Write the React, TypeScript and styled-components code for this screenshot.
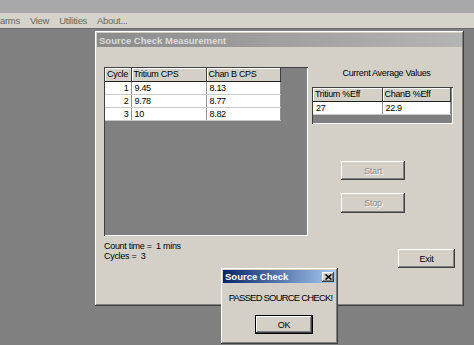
import React from 'react';
import styled, { createGlobalStyle } from 'styled-components';

const GlobalStyle = createGlobalStyle`
  html, body {
    margin: 0;
    padding: 0;
    background: #808080;
  }
  body {
    font-family: "Liberation Sans", Arial, sans-serif;
    font-size: 9px;
    letter-spacing: -0.3px;
    color: #000;
  }
`;

const raised = `
  box-shadow: inset -1px -1px #404040, inset 1px 1px #ffffff,
    inset -2px -2px #808080, inset 2px 2px #d4d0c8;
`;

const Screen = styled.div`
  width: 474px;
  height: 345px;
  overflow: hidden;
  display: flex;
  flex-direction: column;
`;

const TopBand = styled.div`
  height: 13px;
  background: #a8a8aa;
`;

const MenuBar = styled.div`
  height: 15px;
  display: flex;
  align-items: center;
  gap: 10px;
  background: #d6d3ca;
  border-bottom: 1px solid #6a6a6a;
  color: #666;
  font-size: 9.5px;
`;

const MenuItem = styled.span`
  white-space: nowrap;
`;

const Desktop = styled.div`
  position: relative;
  flex: 1;
  background: #808080;
`;

const Window = styled.div<{ $left: number; $top: number; $width: number; $height: number }>`
  position: absolute;
  left: ${(p) => p.$left}px;
  top: ${(p) => p.$top}px;
  width: ${(p) => p.$width}px;
  height: ${(p) => p.$height}px;
  box-sizing: border-box;
  padding: 2px;
  background: #d4d0c8;
  ${raised}
  display: flex;
  flex-direction: column;
`;

const TitleBar = styled.div<{ $active?: boolean }>`
  height: ${(p) => (p.$active ? 13 : 14)}px;
  flex: none;
  display: flex;
  align-items: center;
  justify-content: space-between;
  padding: 0 2px;
  background: ${(p) =>
    p.$active
      ? 'linear-gradient(to right, #0a246a, #a6caf0)'
      : 'linear-gradient(to right, #8c8c8c, #b4b4b4)'};
  color: ${(p) => (p.$active ? '#ffffff' : '#dcdcdc')};
  font-weight: bold;
  font-size: ${(p) => (p.$active ? 9.5 : 9.5)}px;
  letter-spacing: 0;
  white-space: nowrap;
`;

const CloseBox = styled.div`
  width: 12px;
  height: 10px;
  box-sizing: border-box;
  background: #d4d0c8;
  ${raised}
  display: flex;
  align-items: center;
  justify-content: center;
`;

const Content = styled.div`
  display: flex;
  gap: 4px;
  padding: 20px 0 0 7px;
`;

const LeftCol = styled.div`
  width: 204px;
  display: flex;
  flex-direction: column;
`;

const RightCol = styled.div`
  width: 143px;
  display: flex;
  flex-direction: column;
`;

const GridBox = styled.div<{ $width: number; $height: number; $gap?: number }>`
  width: ${(p) => p.$width}px;
  height: ${(p) => p.$height}px;
  margin-top: ${(p) => p.$gap ?? 0}px;
  box-sizing: border-box;
  background: #808080;
  box-shadow: inset 1px 1px #404040, inset -1px -1px #ffffff;
  padding: 1px;
  overflow: hidden;
`;

const Table = styled.table`
  border-collapse: collapse;
  table-layout: fixed;
`;

const HeadCell = styled.th<{ $w: number }>`
  width: ${(p) => p.$w}px;
  height: 13px;
  box-sizing: border-box;
  padding: 0 0 0 2px;
  background: #d4d0c8;
  border-right: 1px solid #404040;
  border-bottom: 1px solid #202020;
  box-shadow: inset 1px 1px #ffffff;
  font-weight: normal;
  text-align: left;
  white-space: nowrap;
  line-height: 12px;
`;

const Cell = styled.td<{ $right?: boolean }>`
  height: 13px;
  box-sizing: border-box;
  padding: ${(p) => (p.$right ? '0 2px 0 0' : '0 0 0 3px')};
  background: #ffffff;
  border-right: 1px solid #909090;
  border-bottom: 1px solid #c8c8c8;
  text-align: ${(p) => (p.$right ? 'right' : 'left')};
  line-height: 12px;
  white-space: nowrap;
`;

const InfoText = styled.div`
  margin-top: 5px;
  line-height: 10px;
`;

const Caption = styled.div`
  margin-top: 1px;
  height: 10px;
  line-height: 10px;
  text-align: center;
  padding-left: 6px;
`;

const Button = styled.button<{ $w: number; $h?: number; $default?: boolean }>`
  width: ${(p) => p.$w}px;
  height: ${(p) => p.$h ?? 19}px;
  box-sizing: border-box;
  padding: 0;
  border: ${(p) => (p.$default ? '1px solid #000' : 'none')};
  background: #d4d0c8;
  ${raised}
  font-family: inherit;
  font-size: 9px;
  letter-spacing: -0.2px;
  color: #000;
  &:disabled {
    color: #8a8a8a;
    text-shadow: 1px 1px #ffffff;
  }
`;

const StartButton = styled(Button)`
  margin: 37px 0 0 29px;
`;

const StopButton = styled(Button)`
  margin: 13px 0 0 29px;
`;

const ExitButton = styled(Button)`
  margin-top: 36px;
  align-self: flex-end;
`;

const Message = styled.div`
  margin-top: 10px;
  line-height: 10px;
  text-align: center;
  font-size: 9.5px;
  letter-spacing: -0.8px;
  padding-left: 2px;
`;

const ButtonRow = styled.div`
  display: flex;
  justify-content: center;
  margin-top: 12px;
  padding-left: 9px;
`;

const cycles = [
  ['1', '9.45', '8.13'],
  ['2', '9.78', '8.77'],
  ['3', '10', '8.82'],
];

const App: React.FC = () => {
  return (
    <>
      <GlobalStyle />
      <Screen>
        <TopBand />
        <MenuBar>
          <MenuItem>arms</MenuItem>
          <MenuItem>View</MenuItem>
          <MenuItem>Utilities</MenuItem>
          <MenuItem>About...</MenuItem>
        </MenuBar>
        <Desktop>
          <Window $left={95} $top={2} $width={369} $height={275}>
            <TitleBar>Source Check Measurement</TitleBar>
            <Content>
              <LeftCol>
                <GridBox $width={204} $height={169}>
                  <Table>
                    <thead>
                      <tr>
                        <HeadCell $w={26}>Cycle</HeadCell>
                        <HeadCell $w={75}>Tritium CPS</HeadCell>
                        <HeadCell $w={74}>Chan B CPS</HeadCell>
                      </tr>
                    </thead>
                    <tbody>
                      {cycles.map((row) => (
                        <tr key={row[0]}>
                          <Cell $right>{row[0]}</Cell>
                          <Cell>{row[1]}</Cell>
                          <Cell>{row[2]}</Cell>
                        </tr>
                      ))}
                    </tbody>
                  </Table>
                </GridBox>
                <InfoText>
                  Count time =&nbsp; 1 mins
                  <br />
                  Cycles =&nbsp; 3
                </InfoText>
              </LeftCol>
              <RightCol>
                <Caption>Current Average Values</Caption>
                <GridBox $width={141} $height={37} $gap={9}>
                  <Table>
                    <thead>
                      <tr>
                        <HeadCell $w={69}>Tritium %Eff</HeadCell>
                        <HeadCell $w={68}>ChanB %Eff</HeadCell>
                      </tr>
                    </thead>
                    <tbody>
                      <tr>
                        <Cell>27</Cell>
                        <Cell>22.9</Cell>
                      </tr>
                    </tbody>
                  </Table>
                </GridBox>
                <StartButton $w={64} disabled>
                  Start
                </StartButton>
                <StopButton $w={64} $h={20} disabled>
                  Stop
                </StopButton>
                <ExitButton $w={57}>Exit</ExitButton>
              </RightCol>
            </Content>
          </Window>

          <Window $left={221} $top={239} $width={117} $height={76}>
            <TitleBar $active>
              Source Check
              <CloseBox>
                <svg width="7" height="6" viewBox="0 0 7 6">
                  <path d="M0.5 0.5 L6.5 5.5 M6.5 0.5 L0.5 5.5" stroke="#000" strokeWidth="1.6" />
                </svg>
              </CloseBox>
            </TitleBar>
            <Message>PASSED SOURCE CHECK!</Message>
            <ButtonRow>
              <Button $w={58} $default>
                OK
              </Button>
            </ButtonRow>
          </Window>
        </Desktop>
      </Screen>
    </>
  );
};

export default App;
